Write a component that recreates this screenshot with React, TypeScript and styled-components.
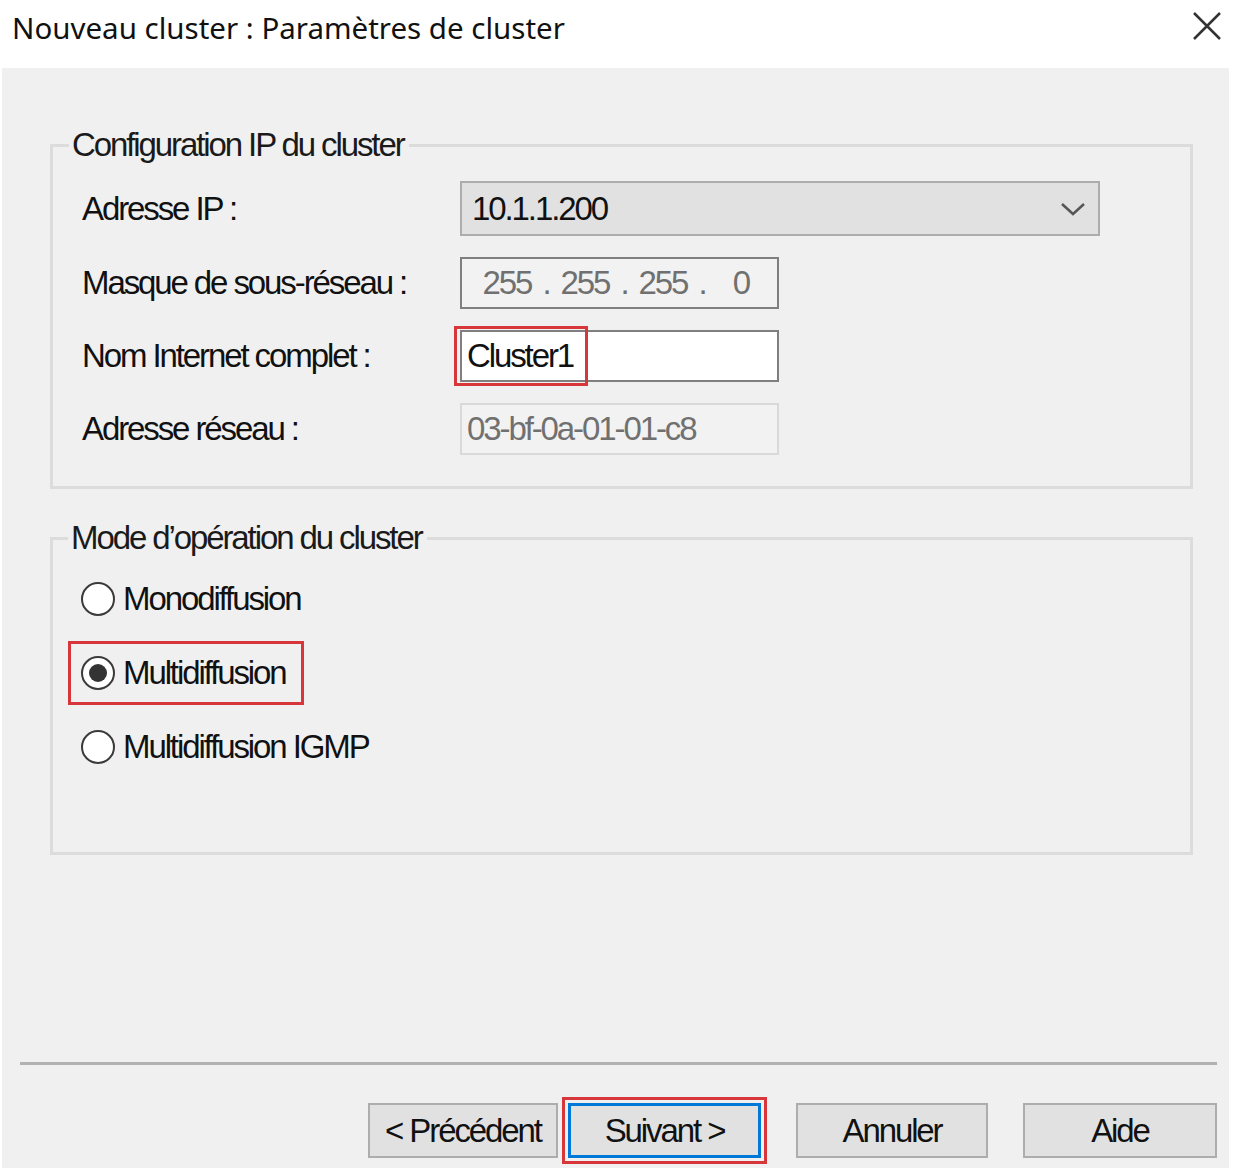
import React from 'react';
import styled, { createGlobalStyle } from 'styled-components';

const GlobalStyle = createGlobalStyle`
  html, body {
    margin: 0;
    padding: 0;
    background: #ffffff;
  }
  * {
    box-sizing: border-box;
  }
`;

const uiFont = `"Liberation Sans Narrow", "Arial Narrow", "Liberation Sans", Arial, sans-serif`;
const red = '#d7373a';

const Window = styled.div`
  width: 1236px;
  height: 1168px;
  display: flex;
  flex-direction: column;
  background: #ffffff;
  overflow: hidden;
`;

const TitleBar = styled.div`
  height: 68px;
  display: flex;
  align-items: flex-start;
  justify-content: space-between;
  padding: 9px 14px 0 12px;
`;

const Title = styled.div`
  font-family: "Noto Sans", "Open Sans", sans-serif;
  font-size: 29.5px;
  line-height: 38px;
  color: #111;
`;

const CloseButton = styled.button`
  width: 30px;
  height: 30px;
  padding: 0;
  margin-top: 2px;
  border: none;
  background: transparent;
  display: flex;
  align-items: center;
  justify-content: center;
`;

const Body = styled.div`
  height: 1100px;
  margin: 0 7px 0 2px;
  background: #f0f0f0;
  display: flex;
  flex-direction: column;
  padding: 0 0 10px 0;
  font-family: ${uiFont};
  font-size: 33px;
  letter-spacing: -2.1px;
  color: #111;
`;

const GroupBox = styled.fieldset<{ $top: number; $pt: number; $pb: number; $pl: number }>`
  margin: ${({ $top }) => $top}px 36px 0 48px;
  padding: ${({ $pt, $pb, $pl }) => `${$pt}px 0 ${$pb}px ${$pl}px`};
  border: 3px solid #dcdcdc;
  min-width: 0;
`;

const Legend = styled.legend`
  margin-left: -13px;
  padding: 0 5px 0 3px;
  font-size: 33px;
  line-height: 34px;
  color: #1a1a1a;
`;

const FormGrid = styled.div`
  display: grid;
  grid-template-columns: 378px auto;
  row-gap: 21px;
  align-items: center;
`;

const Label = styled.div`
  line-height: 34px;
  white-space: nowrap;
`;

const ComboBox = styled.div`
  width: 640px;
  height: 55px;
  background: #e1e1e1;
  border: 2px solid #adadad;
  display: flex;
  align-items: center;
  justify-content: space-between;
  padding: 0 12px 0 10px;
`;

const Field = styled.div<{ $variant: 'ip' | 'edit' | 'readonly' }>`
  width: 319px;
  height: 52px;
  display: flex;
  align-items: center;
  padding-left: ${({ $variant }) => ($variant === 'ip' ? '14px' : '5px')};
  background: ${({ $variant }) => ($variant === 'edit' ? '#ffffff' : '#f2f2f2')};
  border: 2px solid ${({ $variant }) => ($variant === 'readonly' ? '#d9d9d9' : '#7f7f7f')};
  color: ${({ $variant }) => ($variant === 'edit' ? '#111' : '#707070')};
`;

const Octet = styled.span`
  width: 62px;
  text-align: center;
`;

const Dot = styled.span`
  width: 16px;
  text-align: center;
`;

const Marked = styled.span`
  display: inline-block;
  line-height: 34px;
  padding-right: 2px;
  outline: 3px solid ${red};
  outline-offset: 10px;
`;

const RadioList = styled.div`
  display: flex;
  flex-direction: column;
  align-items: flex-start;
  gap: 36px;
`;

const RadioRow = styled.label<{ $marked?: boolean }>`
  height: 38px;
  display: flex;
  align-items: center;
  gap: 8px;
  padding-right: 5px;
  outline: ${({ $marked }) => ($marked ? `3px solid ${red}` : 'none')};
  outline-offset: 10px;
`;

const RadioCircle = styled.span<{ $checked?: boolean }>`
  width: 34px;
  height: 34px;
  border-radius: 50%;
  border: 2.5px solid #3a3a3a;
  background: #ffffff;
  display: flex;
  align-items: center;
  justify-content: center;
  &::after {
    content: '';
    width: 18px;
    height: 18px;
    border-radius: 50%;
    background: ${({ $checked }) => ($checked ? '#333' : 'transparent')};
  }
`;

const Separator = styled.div`
  margin: auto 12px 0 18px;
  height: 3px;
  background: #b2b2b2;
`;

const ButtonRow = styled.div`
  display: flex;
  justify-content: flex-end;
  align-items: center;
  gap: 35px;
  margin-top: 38px;
  padding-right: 12px;
`;

const ButtonPair = styled.div`
  display: flex;
  gap: 10px;
`;

const Button = styled.button<{ $focused?: boolean; $width: number }>`
  width: ${({ $width }) => $width}px;
  height: 55px;
  background: #e1e1e1;
  border: ${({ $focused }) => ($focused ? '3px solid #0078d7' : '2px solid #adadad')};
  font-family: ${uiFont};
  font-size: 33px;
  letter-spacing: -2.1px;
  color: #111;
  padding: 0;
  outline: ${({ $focused }) => ($focused ? `3px solid ${red}` : 'none')};
  outline-offset: 3px;
`;

const Chevron = () => (
  <svg width="26" height="16" viewBox="0 0 26 16">
    <polyline points="2,3 13,13 24,3" fill="none" stroke="#555" strokeWidth="2.5" />
  </svg>
);

const CloseIcon = () => (
  <svg width="30" height="30" viewBox="0 0 30 30">
    <path d="M2 2 L28 28 M28 2 L2 28" stroke="#333" strokeWidth="2.5" fill="none" />
  </svg>
);

const modes = [
  { label: 'Monodiffusion', checked: false },
  { label: 'Multidiffusion', checked: true },
  { label: 'Multidiffusion IGMP', checked: false },
];

export default function App() {
  return (
    <>
      <GlobalStyle />
      <Window>
        <TitleBar>
          <Title>Nouveau cluster : Paramètres de cluster</Title>
          <CloseButton aria-label="Fermer">
            <CloseIcon />
          </CloseButton>
        </TitleBar>
        <Body>
          <GroupBox $top={60} $pt={19} $pb={31} $pl={29}>
            <Legend>Configuration IP du cluster</Legend>
            <FormGrid>
              <Label>Adresse IP :</Label>
              <ComboBox>
                <span>10.1.1.200</span>
                <Chevron />
              </ComboBox>
              <Label>Masque de sous-réseau :</Label>
              <Field $variant="ip">
                <Octet>255</Octet>
                <Dot>.</Dot>
                <Octet>255</Octet>
                <Dot>.</Dot>
                <Octet>255</Octet>
                <Dot>.</Dot>
                <Octet>0</Octet>
              </Field>
              <Label>Nom Internet complet :</Label>
              <Field $variant="edit">
                <Marked>Cluster1</Marked>
              </Field>
              <Label>Adresse réseau :</Label>
              <Field $variant="readonly">03-bf-0a-01-01-c8</Field>
            </FormGrid>
          </GroupBox>
          <GroupBox $top={32} $pt={25} $pb={86} $pl={28}>
            <Legend>Mode d’opération du cluster</Legend>
            <RadioList>
              {modes.map((m) => (
                <RadioRow key={m.label} $marked={m.checked}>
                  <RadioCircle $checked={m.checked} />
                  {m.label}
                </RadioRow>
              ))}
            </RadioList>
          </GroupBox>
          <Separator />
          <ButtonRow>
            <ButtonPair>
              <Button $width={190}>&lt; Précédent</Button>
              <Button $width={193} $focused>
                Suivant &gt;
              </Button>
            </ButtonPair>
            <Button $width={192}>Annuler</Button>
            <Button $width={194}>Aide</Button>
          </ButtonRow>
        </Body>
      </Window>
    </>
  );
}
